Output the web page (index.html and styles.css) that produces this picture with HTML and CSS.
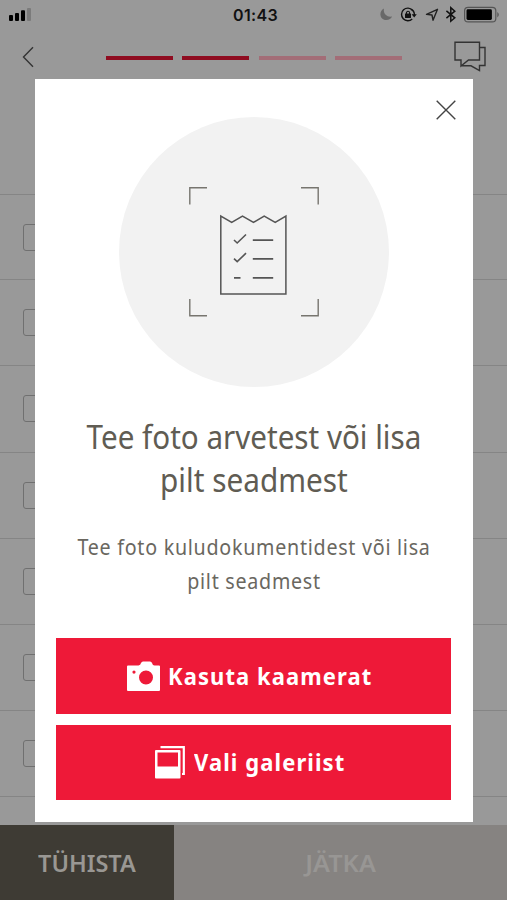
FILE: index.html
```html
<!DOCTYPE html>
<html lang="et">
<head>
<meta charset="utf-8">
<title>Lisa arved</title>
<link rel="stylesheet" href="styles.css">
</head>
<body>
<div class="screen">
  <header class="status">
    <svg class="signal" width="26" height="15" viewBox="0 0 26 15"><rect x="1" y="8" width="4" height="6" rx="1"/><rect x="7" y="6" width="4" height="8" rx="1"/><rect x="13" y="3.2" width="4" height="10.8" rx="1"/><rect x="19" y="1" width="4" height="13" rx="1" fill="#7b7b7b"/></svg>
    <time class="clock">01:43</time>
    <svg class="indicators" width="127" height="20" viewBox="0 0 127 20">
      <path d="M4 3.500C-1.800 6.500 -.3 15 6.300 15C9 15 11.200 13.800 12 11.500C7 12.500 2.800 8.800 4 3.500Z" fill="#686868"/>
      <path d="M32.500 5.200A6.300 6.300 0 1 0 32.200 14M34.400 10A6.300 6.300 0 0 0 30.500 4" fill="none" stroke="#111" stroke-width="1.400"/>
      <path d="M31.600 9.200H36.800L34.200 12.400Z" fill="#111"/>
      <rect x="25" y="8.500" width="6" height="4.500" rx=".6" fill="#111"/>
      <path d="M26.400 9V7.900a1.600 1.600 0 0 1 3.200 0V9" fill="none" stroke="#111" stroke-width="1.100"/>
      <path d="M57.500 4.300L46.500 9.400L52 10L53 15.200Z" fill="none" stroke="#222" stroke-width="1.400" stroke-linejoin="round"/>
      <path d="M66.400 5.800L74.800 12.800L70.800 16.200V2.700L74.800 6.200L66.400 13.200" fill="none" stroke="#111" stroke-width="1.500"/>
      <rect x="84.600" y="2.300" width="31.200" height="14.600" rx="3.500" fill="none" stroke="#555" stroke-width="1.200"/>
      <rect x="86.500" y="4.300" width="25.400" height="10.600" rx="1.400"/>
      <path d="M117.300 7q3 2.700 0 5.400z" fill="#555"/>
    </svg>
  </header>
  <nav class="nav">
    <svg class="back" width="13" height="22" viewBox="0 0 13 22"><path d="M11 1.300L1.500 11L11 20.700" fill="none" stroke="#333" stroke-width="1.400"/></svg>
    <div class="steps"><i class="step done"></i><i class="step done"></i><i class="step"></i><i class="step"></i></div>
    <svg class="chat" width="33" height="31" viewBox="0 0 33 31"><path d="M1 1.300H25.500V19H14.500L7 25V19H1ZM25.500 6.500H31V24.500H25.500V29.500L17 24.800H7.500" fill="none" stroke="#333" stroke-width="1.400"/></svg>
  </nav>
  <main class="list">
    <div class="row"><i class="check"></i></div>
    <div class="row"><i class="check"></i></div>
    <div class="row"><i class="check"></i></div>
    <div class="row"><i class="check"></i></div>
    <div class="row"><i class="check"></i></div>
    <div class="row"><i class="check"></i></div>
    <div class="row"><i class="check"></i></div>
    <div class="row last"></div>
  </main>
  <footer class="footer">
    <div class="cancel"><span class="cancel-text">TÜHISTA</span></div>
    <div class="next"><span class="next-text">JÄTKA</span></div>
  </footer>

  <section class="modal">
    <svg class="close" width="22" height="22" viewBox="0 0 22 22"><path d="M1.700 1.700L20.300 20.300M20.300 1.700L1.700 20.300" stroke="#444" stroke-width="1.400"/></svg>
    <div class="circle">
      <svg width="132" height="132" viewBox="0 0.5 132 132" fill="none">
        <path d="M1.800 19V2.200H19M113 2.200H130.200V19M1.800 113.500V130.200H19M113 130.200H130.200V113.500" stroke="#77756f" stroke-width="1.400"/>
        <path d="M32.800 30.500V108.500H97.900V30.500L87.200 37L76.200 30.500L65.500 37L54.500 30.500L43.700 37Z" stroke="#555" stroke-width="1.500"/>
        <path d="M46 54.500L49.200 57.500L58 49M46 73.200L49.200 76.200L58 67.700M46 92.400H52.500M64.800 54.600H85.200M64.800 73.400H85.200M64.800 92.400H85.200" stroke="#555" stroke-width="1.600"/>
      </svg>
    </div>
    <h1 class="title"><span class="t1">Tee foto arvetest või lisa</span><span class="t2">pilt seadmest</span></h1>
    <p class="text"><span class="p1">Tee foto kuludokumentidest või lisa</span><span class="p2">pilt seadmest</span></p>
    <div class="actions">
      <button class="button camera">
        <svg width="33" height="31" viewBox="0 0 33 31"><path fill="#fff" fill-rule="evenodd" d="M1 4.500H11.500Q13.500 4 14 2Q14.700.500 16 .500H23Q24.500.500 25 2Q25.700 4.500 27.500 4.500H32Q33 4.500 33 5.500V29Q33 30 32 30H1Q0 30 0 29V5.500Q0 4.500 1 4.500ZM19 9.500A7 7 0 1 0 19 23.500A7 7 0 1 0 19 9.500ZM7 9.500A1.600 1.600 0 1 0 7 12.700A1.600 1.600 0 1 0 7 9.500Z"/></svg>
        <span class="b1">Kasuta kaamerat</span>
      </button>
      <button class="button gallery">
        <svg width="31" height="33" viewBox="0 0 31 33" fill="none"><path fill="#fff" fill-rule="evenodd" d="M1 4H24.500Q25.500 4 25.500 5V31.500Q25.500 32.500 24.500 32.500H1Q0 32.500 0 31.500V5Q0 4 1 4ZM2.500 6.500V20.500H23V6.500Z"/><path d="M5.500 1.200H28.800V28H27" stroke="#fff" stroke-width="2.200"/></svg>
        <span class="b2">Vali galeriist</span>
      </button>
    </div>
  </section>
</div>
</body>
</html>
```

FILE: styles.css
```css
* { box-sizing: border-box; }
body { margin: 0; font-family: "Noto Sans", sans-serif; }
.screen { position: relative; width: 507px; height: 900px; overflow: hidden; background: #999; display: flex; flex-direction: column; }
svg { display: block; flex: none; }
.status { height: 30px; display: grid; grid-template-columns: 1fr auto 1fr; align-items: center; padding: 0 0 0 8px; }
.signal { margin-top: -1px; }
.clock { font: 600 16px/30px Inter, sans-serif; color: #111; width: 45px; text-align: center; letter-spacing: .3px; margin-left: -4px; }
.indicators { justify-self: end; }
.nav { height: 164px; display: flex; align-items: flex-start; padding: 11px 20px 0 22px; }
.back { margin-top: 5px; }
.steps { display: flex; gap: 9.600px; margin: 14.500px auto 0 70.500px; }
.step { width: 67px; height: 4px; background: #a36d77; }
.step.done { background: #8f0c20; }
.list { height: 630.500px; }
.row { height: 86.200px; border-top: 1px solid #858585; display: flex; align-items: center; padding-left: 22.500px; }
.row:first-child { height: 85.200px; }
.row.last { height: 28px; }
.check { width: 27px; height: 27px; border: 1.500px solid #707070; border-radius: 3px; }
.footer { flex: 1; display: flex; font-size: 24px; font-weight: 600; }
.cancel, .next { display: flex; align-items: center; justify-content: center; }
.cancel { width: 174px; background: #3e3b34; color: #999793; }
.next { flex: 1; background: #868381; color: #989694; }
.footer span { display: block; white-space: nowrap; }
.cancel-text { transform: scaleX(.98); }
.next-text { transform: scaleX(1.05); }
.modal { position: absolute; left: 34.500px; top: 79px; width: 438.700px; height: 743px; background: #fff; display: flex; flex-direction: column; align-items: center; padding-top: 38px; }
.close { position: absolute; right: 16px; top: 19.500px; }
.circle { width: 270px; height: 270px; border-radius: 50%; background: #f2f2f2; display: grid; place-items: center; }
.title, .text { margin: 0; color: #605c53; font-weight: 400; text-align: center; white-space: nowrap; display: flex; flex-direction: column; align-items: center; }
.title { font-size: 32px; line-height: 43px; margin-top: 28px; }
.text { font-size: 21.500px; line-height: 33.500px; margin-top: 29px; color: #6a675f; letter-spacing: .8px; }
.t1 { transform: scaleX(.925); }
.t2 { transform: scaleX(.93); }
.p1, .p2 { transform: scaleX(.915); }
.actions { margin-top: auto; margin-bottom: 22px; display: flex; flex-direction: column; gap: 11px; }
.button { width: 395px; height: 75.300px; border: 0; padding: 0; background: #ee1938; color: #fff; font: 700 24px/1 "Noto Sans", sans-serif; display: flex; align-items: center; white-space: nowrap; gap: 8px; }
.camera { padding-left: 70.500px; }
.gallery { padding-left: 98.500px; }
.button span { transform-origin: left center; letter-spacing: 1.200px; }
.b1, .b2 { transform: scaleX(.915); }
```
